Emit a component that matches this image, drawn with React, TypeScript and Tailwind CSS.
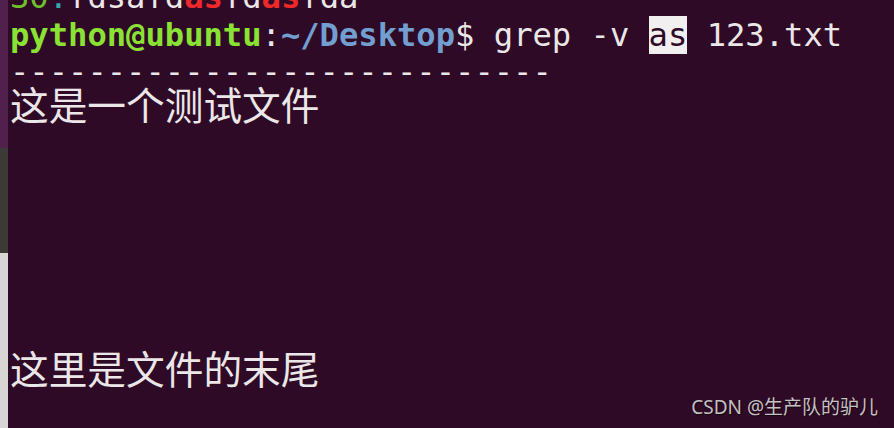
import React from 'react';

const mono = { fontFamily: '"DejaVu Sans Mono", "Liberation Mono", monospace' };

function Line({ children, cjk }: { children?: React.ReactNode; cjk?: boolean }) {
  if (cjk) {
    return (
      <div className="h-[37.7px] whitespace-pre font-['Noto_Sans_CJK_SC',sans-serif] text-[38.7px] leading-[37.7px] -translate-y-[7px]">
        {children}
      </div>
    );
  }
  return <div className="h-[37.7px] whitespace-pre text-[32.15px] leading-[37.7px]">{children}</div>;
}

export default function App() {
  return (
    <div className="relative flex h-[428px] w-[894px] items-stretch overflow-hidden bg-[#2f0a26]">
      {/* sliver of the window behind the terminal */}
      <div className="flex h-full w-[8px] shrink-0 flex-col">
        <div className="h-[148px] bg-[#52204c]" />
        <div className="h-[105px] bg-[#3b3a37]" />
        <div className="grow bg-[#d8d6d4]" />
      </div>

      <div className="flex-1 pl-[2px] text-[#ebe6e8]" style={mono}>
        <div className="-mt-[21px]">
          <Line>
            <span className="text-[#6fbf2e]">30</span>
            <span className="text-[#2fa7b0]">:</span>
            fdsafd<span className="font-bold text-[#ef2929]">as</span>fd
            <span className="font-bold text-[#ef2929]">as</span>fda
          </Line>
          <Line>
            <span className="font-bold text-[#8ae234]">python@ubuntu</span>
            <span>:</span>
            <span className="font-bold text-[#729fcf]">~/Desktop</span>$ grep -v{' '}
            <span className="bg-[#f2eff0] text-[#2f0a26]">as</span> 123.txt
          </Line>
          <Line>{'-'.repeat(28)}</Line>
          <Line cjk>这是一个测试文件</Line>
          <Line />
          <Line />
          <Line />
          <Line />
          <Line />
          <Line />
          <Line cjk>这里是文件的末尾</Line>
        </div>
      </div>

      <div className="absolute bottom-[7px] right-[16px] font-['Noto_Sans','Noto_Sans_CJK_SC',sans-serif] text-[19px] text-[#c4c0c3] [text-shadow:1px_1px_1px_rgba(0,0,0,0.6)]">
        CSDN @生产队的驴儿
      </div>
    </div>
  );
}
